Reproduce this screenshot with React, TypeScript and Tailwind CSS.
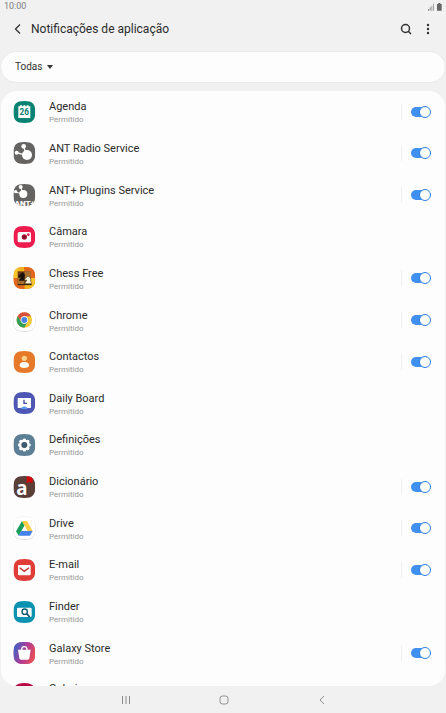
import { useState } from 'react'
import type { ReactNode } from 'react'

const squircle = 'M33 0C57 0 66 9 66 33S57 66 33 66 0 57 0 33 9 0 33 0Z'

function AppIcon({ id, fill, children }: { id: string; fill: string; children?: ReactNode }) {
  return (
    <svg viewBox="-1 -3 72 72" className="w-6 h-6 shrink-0" aria-hidden="true">
      <defs>
        <clipPath id={`clip-${id}`}>
          <path d={squircle} />
        </clipPath>
      </defs>
      {fill === '#ffffff' && (
        <>
          <path d={squircle} fill="#cfcfcf" transform="translate(0 2)" />
          <path d={squircle} fill="#ffffff" stroke="#e6e6e6" strokeWidth="2" />
        </>
      )}
      <g clipPath={`url(#clip-${id})`}>
        <rect width="66" height="66" fill={fill} />
        {children}
      </g>
    </svg>
  )
}

function CalendarArt() {
  return (
    <>
      <path d="M15 16h5v-3h6v3h4v-3h6v3h4v-3h6v3h5v35H15Z" fill="#fff" />
      <text x="33" y="43" textAnchor="middle" fontSize="25" fontWeight="700" fill="#0a7d70" className="font-['Roboto',sans-serif]">
        26
      </text>
    </>
  )
}

function AntArt() {
  return (
    <g fill="#fff" stroke="#fff">
      <path d="M31 13L36 30M10 32L30 38" strokeWidth="4" />
      <circle cx="31" cy="13" r="7" stroke="none" />
      <circle cx="10" cy="32" r="6" stroke="none" />
      <circle cx="41" cy="39" r="15" stroke="none" />
    </g>
  )
}

function AntPlusArt() {
  return (
    <>
      <g fill="#fff" stroke="#fff">
        <path d="M22 9L27 24M6 24L24 29" strokeWidth="3" />
        <circle cx="22" cy="9" r="6" stroke="none" />
        <circle cx="7" cy="23" r="5" stroke="none" />
        <circle cx="30" cy="30" r="12" stroke="none" />
      </g>
      <text x="34" y="66" textAnchor="middle" fontSize="24" fontWeight="900" fill="#fff" className="font-['Roboto',sans-serif]">
        ANT+
      </text>
    </>
  )
}

function CameraArt() {
  return (
    <>
      <rect x="13" y="18" width="40" height="31" rx="5" fill="#fff" />
      <circle cx="33" cy="33" r="8" fill="#b0123c" />
      <circle cx="33" cy="33" r="4" fill="#6e0c28" />
      <circle cx="45" cy="26" r="4" fill="#ee1c4e" />
    </>
  )
}

function ChessArt() {
  return (
    <>
      <path d="M0 0h33v33H0ZM33 33h33v33H33Z" fill="#f5b81c" />
      <path d="M33 0h33v33H33ZM0 33h33v33H0Z" fill="#e2661c" />
      <path d="M0 0h14v33H0ZM52 33h14v33H52Z" fill="#f9c52a" />
      <rect x="13" y="13" width="40" height="40" fill="#6b3a14" />
      <path d="M33 13h20v20H33ZM13 33h20v20H13Z" fill="#a8702a" />
      <path d="M17 41c0-6 6-8 6-12l-6 3-2-5 8-7 3-4c8 2 10 8 8 14l-1 11Z" fill="#1a120c" />
      <path d="M35 50c1-5 5-8 5-11l-5 1-1-4 7-6 3-3c7 3 10 9 8 15l3 8Z" fill="#fff6da" stroke="#3a2a18" strokeWidth="1.5" />
      <path d="M13 53h42" stroke="#241a12" strokeWidth="3" />
    </>
  )
}

function ChromeArt() {
  return (
    <>
      <circle cx="33" cy="33" r="23" fill="#fbc83a" />
      <path d="M13 21.500A23 23 0 0 1 53 21.500H33A11 11 0 0 0 23.500 38.500Z" fill="#d9503f" />
      <path d="M13 21.500A23 23 0 0 0 33 56L42.500 38.500A11 11 0 0 1 23.500 38.500Z" fill="#2f9c58" />
      <circle cx="33" cy="33" r="11" fill="#fff" />
      <circle cx="33" cy="33" r="9" fill="#4a86ea" />
    </>
  )
}

function ContactsArt() {
  return (
    <>
      <circle cx="33" cy="22" r="8" fill="#fbd08a" />
      <path d="M19 43c0-7 6-10 14-10s14 3 14 10c0 6-6 8-14 8s-14-2-14-8Z" fill="#fff" />
    </>
  )
}

function BoardArt() {
  return (
    <>
      <rect x="13" y="18" width="40" height="30" rx="2" fill="#fff" />
      <path d="M32 23v11h9" fill="none" stroke="#3f479e" strokeWidth="4" />
      <path d="M24 48c3-6 15-6 18 0v3H24Z" fill="#5b9bf0" />
    </>
  )
}

function GearArt() {
  return (
    <>
      <g stroke="#fff" strokeWidth="11" strokeLinecap="round">
        <path d="M33 19v28M19 33h28M23 23l20 20M43 23L23 43" />
      </g>
      <circle cx="33" cy="33" r="15" fill="#fff" />
      <circle cx="33" cy="33" r="9" fill="#3d5a6c" />
    </>
  )
}

function DictionaryArt() {
  return (
    <>
      <path d="M40 0h18v22l-9-4-9 4Z" fill="#d20a0a" />
      <text x="26" y="57" textAnchor="middle" fontSize="56" fontWeight="700" fill="#fff" className="font-['Open_Sans',sans-serif]">
        a
      </text>
    </>
  )
}

function DriveArt() {
  return (
    <>
      <path d="M26 12L8 43l8 13 18-31Z" fill="#1b9e5c" />
      <path d="M26 12h15l17 30H43Z" fill="#fccd46" />
      <path d="M24 42h34l-8 14H16Z" fill="#4583ec" />
    </>
  )
}

function MailArt() {
  return (
    <>
      <rect x="14" y="18" width="38" height="31" rx="3" fill="#fff" />
      <path d="M19 26l14 11 14-11" fill="none" stroke="#c22f2c" strokeWidth="4" />
    </>
  )
}

function FinderArt() {
  return (
    <>
      <rect x="11" y="20" width="44" height="28" rx="4" fill="#fff" />
      <circle cx="34" cy="32" r="8" fill="none" stroke="#0d5570" strokeWidth="4" />
      <path d="M40 38l9 10" stroke="#0d5570" strokeWidth="5" />
    </>
  )
}

function StoreArt() {
  return (
    <>
      <defs>
        <linearGradient id="store-fill" x1="0" y1="0.3" x2="1" y2="0.7">
          <stop offset="0" stopColor="#3c62c8" />
          <stop offset="0.5" stopColor="#b03a94" />
          <stop offset="1" stopColor="#f0524e" />
        </linearGradient>
      </defs>
      <rect width="66" height="66" fill="url(#store-fill)" />
      <path d="M14 23h38l-4 26q-1 4-5 4H23q-4 0-5-4Z" fill="#fff" />
      <path d="M25 26v-4c0-11 16-11 16 0v4" fill="none" stroke="#fff" strokeWidth="4" />
    </>
  )
}

const apps = [
  { id: 'agenda', name: 'Agenda', fill: '#0a8273', art: <CalendarArt />, toggle: true },
  { id: 'ant-radio', name: 'ANT Radio Service', fill: '#666462', art: <AntArt />, toggle: true },
  { id: 'ant-plugins', name: 'ANT+ Plugins Service', fill: '#666462', art: <AntPlusArt />, toggle: true },
  { id: 'camara', name: 'Câmara', fill: '#ee1c4e', art: <CameraArt />, toggle: false },
  { id: 'chess', name: 'Chess Free', fill: '#e2661c', art: <ChessArt />, toggle: true },
  { id: 'chrome', name: 'Chrome', fill: '#ffffff', art: <ChromeArt />, toggle: true },
  { id: 'contactos', name: 'Contactos', fill: '#e67a2a', art: <ContactsArt />, toggle: true },
  { id: 'daily-board', name: 'Daily Board', fill: '#4e57b4', art: <BoardArt />, toggle: false },
  { id: 'definicoes', name: 'Definições', fill: '#5c7f95', art: <GearArt />, toggle: false },
  { id: 'dicionario', name: 'Dicionário', fill: '#5a3e38', art: <DictionaryArt />, toggle: true },
  { id: 'drive', name: 'Drive', fill: '#ffffff', art: <DriveArt />, toggle: true },
  { id: 'email', name: 'E-mail', fill: '#e03c38', art: <MailArt />, toggle: true },
  { id: 'finder', name: 'Finder', fill: '#0b92b0', art: <FinderArt />, toggle: false },
  { id: 'galaxy-store', name: 'Galaxy Store', fill: '#b03a94', art: <StoreArt />, toggle: true },
]

function StatusBar() {
  return (
    <div className="flex items-center justify-between h-3.5 pl-1 pr-1 text-[9px] text-[#7d7d7d]">
      <span>10:00</span>
      <svg viewBox="0 0 42 24" className="w-3.5 h-2" aria-hidden="true">
        <path d="M0 18h3v5H0ZM5 13h3v10H5Z" fill="#8a8a8a" />
        <path d="M10 8h3v15h-3ZM15 2h3v21h-3Z" fill="#a2a2a2" />
        <path d="M27 3h4V0h6v3h4v20H27Z" fill="#666" />
      </svg>
    </div>
  )
}

function Header() {
  return (
    <header className="flex items-center h-[30px] pl-3 pr-3">
      <button aria-label="Voltar" className="flex items-center justify-center w-3 h-6">
        <svg viewBox="0 0 12 12" className="w-3 h-3" fill="none" stroke="#333" strokeWidth="1.3">
          <path d="M8 1.500L3.500 6 8 10.500" />
        </svg>
      </button>
      <h1 className="flex-1 pl-[7px] text-[12px] leading-4 text-[#2b2b2b]">Notificações de aplicação</h1>
      <button aria-label="Procurar" className="flex items-center justify-center w-5 h-6">
        <svg viewBox="0 0 12 12" className="w-3 h-3" fill="none" stroke="#333" strokeWidth="1.500">
          <circle cx="5.500" cy="5.500" r="4" />
          <path d="M8.300 8.300L11 11" />
        </svg>
      </button>
      <button aria-label="Mais opções" className="flex items-center justify-center w-3 h-6 ml-1.5">
        <svg viewBox="0 0 4 12" className="w-1 h-3" fill="#333">
          <circle cx="2" cy="2" r="1.200" />
          <circle cx="2" cy="6" r="1.200" />
          <circle cx="2" cy="10" r="1.200" />
        </svg>
      </button>
    </header>
  )
}

function Filter() {
  return (
    <div className="flex items-center h-8 mt-[7px] pl-3.5 rounded-full bg-[#fdfdfd] border border-[#e9e9e9]">
      <select aria-label="Filtro" className="appearance-none bg-transparent text-[10px] leading-4 text-[#333]">
        <option>Todas</option>
      </select>
      <svg viewBox="0 0 6 4" className="w-1.5 h-1 ml-1 pointer-events-none" fill="#333" aria-hidden="true">
        <path d="M0 0h6L3 4Z" />
      </svg>
    </div>
  )
}

function Switch({ id, checked, onChange }: { id: string; checked: boolean; onChange: () => void }) {
  return (
    <div className="flex items-center h-4 pl-2 border-l border-[#f0f0f0]">
      <input
        id={id}
        type="checkbox"
        role="switch"
        checked={checked}
        onChange={onChange}
        className="appearance-none flex items-center w-[22px] h-3 before:w-4 before:h-[10px] before:ml-px before:rounded-full before:bg-[#b5b5b5] checked:before:bg-[#4090f2] after:w-3 after:h-3 after:-ml-4 checked:after:-ml-2 after:rounded-full after:bg-white after:border after:border-[#9a9a9a] checked:after:border-[#2f7fe0]"
      />
    </div>
  )
}

export default function App() {
  const [off, setOff] = useState<string[]>([])

  const flip = (id: string) => {
    setOff((prev) => (prev.includes(id) ? prev.filter((x) => x !== id) : [...prev, id]))
  }

  return (
    <div className="flex flex-col min-h-screen bg-[#f1f1f1] font-['Roboto',sans-serif]">
      <StatusBar />
      <Header />
      <Filter />

      {/* App list */}
      <main className="flex flex-col flex-1 mt-2 mx-px rounded-2xl overflow-hidden bg-[#fdfdfd]">
        <ul className="grid auto-rows-fr flex-1">
          {apps.map((app) => (
            <li key={app.id} className="flex items-center pl-3 pr-[13px]">
              <AppIcon id={app.id} fill={app.fill}>
                {app.art}
              </AppIcon>
              <div className="flex-1 pl-3 pt-[3px]">
                <label htmlFor={app.toggle ? app.id : undefined} className="block text-[11px] leading-[14px] text-[#2b2b2b]">
                  {app.name}
                </label>
                <p className="text-[8px] leading-3 text-[#999]">Permitido</p>
              </div>
              {app.toggle && <Switch id={app.id} checked={!off.includes(app.id)} onChange={() => flip(app.id)} />}
            </li>
          ))}
        </ul>
        {/* Next row, cut off by the panel edge */}
        <div className="flex items-start h-3 pl-3 pt-2 overflow-hidden">
          <AppIcon id="galeria" fill="#b80a44" />
          <p className="pl-3 text-[11px] leading-[14px] text-[#2b2b2b]">Galeria</p>
        </div>
      </main>

      {/* Navigation bar */}
      <nav className="flex items-center justify-center h-[27px] pl-0.5 gap-[86px]">
        <button aria-label="Recentes" className="flex justify-center w-3">
          <svg viewBox="0 0 12 12" className="w-3 h-3" stroke="#8c8c8c" strokeWidth="1">
            <path d="M2.500 2v8M6 2v8M9.500 2v8" />
          </svg>
        </button>
        <button aria-label="Início" className="flex justify-center w-3">
          <svg viewBox="0 0 12 12" className="w-3 h-3" fill="none" stroke="#8c8c8c" strokeWidth="1">
            <rect x="2" y="2" width="8" height="8" rx="2.500" />
          </svg>
        </button>
        <button aria-label="Retroceder" className="flex justify-center w-3">
          <svg viewBox="0 0 12 12" className="w-3 h-3" fill="none" stroke="#8c8c8c" strokeWidth="1">
            <path d="M8 2L4 6l4 4" />
          </svg>
        </button>
      </nav>
    </div>
  )
}
